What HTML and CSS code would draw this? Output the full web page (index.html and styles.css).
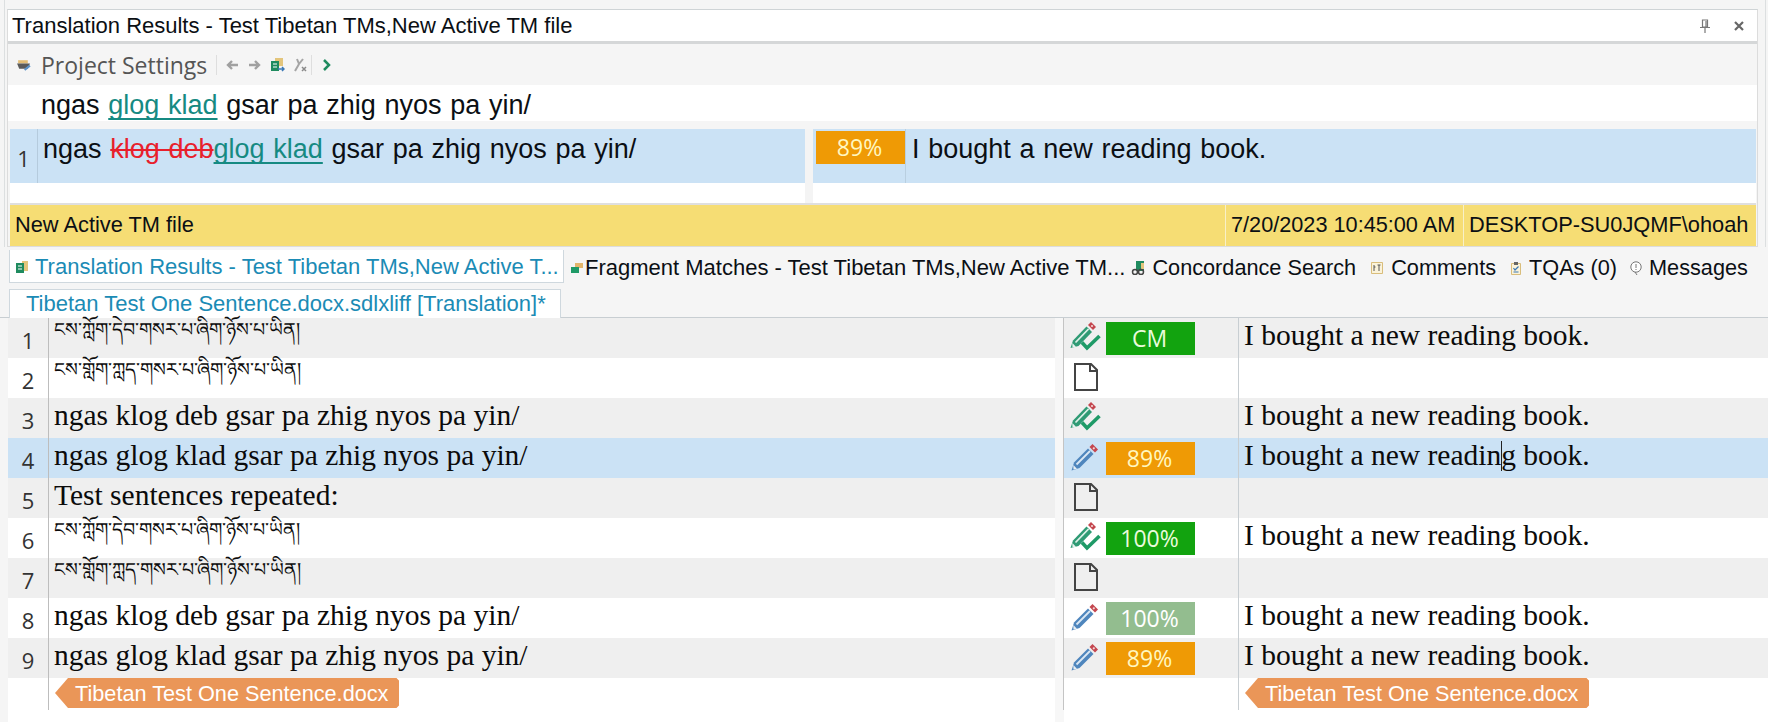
FILE: index.html
```html
<!DOCTYPE html>
<html lang="en">
<head>
<meta charset="utf-8">
<title>Translation Results</title>
<link rel="stylesheet" href="styles.css">
</head>
<body>
<svg class="defs" width="0" height="0" aria-hidden="true">
  <symbol id="pencil" viewBox="0 0 28 28">
    <path d="M0.500 27.500 3 19.500 17 5.500 22.500 11 8.500 25Z" fill="#4f86bd"/>
    <path d="M5.500 21.500 19 8" stroke="#dbe8f4" stroke-width="1.800"/>
    <path d="M18.500 4 21.500 1 27 6.500 24 9.500Z" fill="#c4464e"/>
    <circle cx="22.800" cy="5.300" r="1.100" fill="#f2d6d6"/>
    <path d="M2.300 22 6 25.700 2.500 26.500Z" fill="#e8eef3"/>
  </symbol>
  <symbol id="pencil-check" viewBox="0 0 32 30">
    <path d="M1.500 27 4 19.500 17.500 5.500 23 11 9.500 25Z" fill="#2f9a74"/>
    <path d="M6.500 21.500 19.500 8" stroke="#dff1e9" stroke-width="1.800"/>
    <path d="M19 4 22 1 27 6 24 9Z" fill="#c4464e"/>
    <circle cx="23" cy="5" r="1.100" fill="#f2d6d6"/>
    <path d="M3.300 22 7 25.700 3.500 26.500Z" fill="#e8f2ee"/>
    <path d="M13 21.500 18 27 30.500 15" fill="none" stroke="#1f9a67" stroke-width="3.600"/>
  </symbol>
  <symbol id="doc" viewBox="0 0 24 28">
    <path d="M1 1H17L23 7V27H1Z" fill="none" stroke="#444" stroke-width="2"/>
    <path d="M16 1V8H23" fill="none" stroke="#444" stroke-width="2"/>
  </symbol>
</svg>

<main class="app">
  <div class="dock">
  <section class="panel">
    <header class="panel-head">
      <h1 class="panel-title">Translation Results - Test Tibetan TMs,New Active TM file</h1>
      <svg class="pin" viewBox="0 0 12 14" width="12" height="14"><path d="M3.500 1H8.500V8H3.500ZM1 8.500H11M6 9V14M7 2V8" fill="none" stroke="#777" stroke-width="1.200"/></svg>
      <svg class="close" viewBox="0 0 12 12" width="12" height="12"><path d="M2 2 10 10M10 2 2 10" stroke="#666" stroke-width="2.200"/></svg>
    </header>
    <div class="toolbar">
      <svg class="t-icon settings" viewBox="0 0 14 14" width="15" height="15"><path d="M2 3H11V6H2Z" fill="#e3bd74"/><path d="M1 6H13L11 11H3Z" fill="#5b5b5b"/><path d="M8 12 13 8" stroke="#5d93c7" stroke-width="2"/></svg>
      <span class="t-label">Project Settings</span>
      <span class="t-sep"></span>
      <svg class="t-arrow" viewBox="0 0 14 12" width="14" height="12"><path d="M13 6H3M7 2 3 6 7 10" fill="none" stroke="#a0a0a0" stroke-width="2.400"/></svg>
      <svg class="t-arrow" viewBox="0 0 14 12" width="14" height="12"><path d="M1 6H11M7 2 11 6 7 10" fill="none" stroke="#a0a0a0" stroke-width="2.400"/></svg>
      <svg class="t-icon db" viewBox="0 0 14 14" width="14" height="14"><path d="M4 0H12V8H4Z" fill="#e3c57c"/><path d="M0 3H8V13H0Z" fill="#1f8b5f"/><path d="M2 6H6M2 9H6" stroke="#fff"/><path d="M7 11H13M11 9 13 11 11 13" fill="none" stroke="#3b78b5" stroke-width="1.500"/></svg>
      <svg class="t-icon tools" viewBox="0 0 14 14" width="14" height="14"><path d="M10 1 6 6 2 13M4 1 6 6" fill="none" stroke="#a5a5a5" stroke-width="2"/><path d="M9 9 13 13M13 9 9 13" stroke="#8a8a8a" stroke-width="1.500"/></svg>
      <span class="t-sep t-sep-2"></span>
      <svg class="t-chev" viewBox="0 0 10 14" width="10" height="14"><path d="M2 2 7 7 2 12" fill="none" stroke="#1f8b5f" stroke-width="2.500"/></svg>
    </div>
    <div class="source">ngas <u class="ins">glog klad</u> gsar pa zhig nyos pa yin/</div>
    <div class="result">
      <div class="res-left">
        <div class="res-num">1</div>
        <div class="res-text">ngas <s class="del">klog deb</s><u class="ins">glog klad</u> gsar pa zhig nyos pa yin/</div>
      </div>
      <div class="res-split"></div>
      <div class="res-right">
        <div class="res-badge"><span class="badge orange">89%</span></div>
        <div class="res-text res-target">I bought a new reading book.</div>
      </div>
    </div>
    <div class="res-blank"><span class="blank-l"></span><span class="res-split"></span><span class="blank-r"></span></div>
    <div class="infobar">
      <span class="info-main">New Active TM file</span>
      <span class="info-date">7/20/2023 10:45:00 AM</span>
      <span class="info-user">DESKTOP-SU0JQMF\ohoah</span>
    </div>
  </section>
  </div>

  <nav class="tabs">
    <div class="tab active">
      <svg viewBox="0 0 14 14" width="14" height="14"><path d="M7 1H13V11H7Z" fill="#e3c57c"/><path d="M1 3H9V13H1Z" fill="#1f8b5f"/><path d="M3 6H7M3 9H7" stroke="#fff"/></svg>
      <span class="tab-text">Translation Results - Test Tibetan TMs,New Active T...</span>
    </div>
    <div class="tab frag">
      <svg viewBox="0 0 14 14" width="14" height="14"><path d="M5 2H13V7H5Z" fill="#e3b66c"/><path d="M1 6H9V12H1Z" fill="#1f9a67"/></svg>
      <span>Fragment Matches - Test Tibetan TMs,New Active TM...</span>
    </div>
    <div class="tab conc">
      <svg viewBox="0 0 14 14" width="14" height="14"><path d="M5 0H13V10H5Z" fill="#1f8b5f"/><path d="M10 2H13V8H10Z" fill="#e3c57c"/><circle cx="4" cy="11" r="2.500" fill="none" stroke="#444" stroke-width="1.500"/><circle cx="10" cy="11" r="2.500" fill="none" stroke="#444" stroke-width="1.500"/></svg>
      <span>Concordance Search</span>
    </div>
    <div class="tab comm">
      <svg viewBox="0 0 14 14" width="14" height="14"><path d="M1.500 1.500H12.500V12.500H1.500Z" fill="#fbf3da" stroke="#d9bd7b"/><path d="M4 4V10M4 6H5.500M9 4V10M7.500 4H10.500" stroke="#555"/></svg>
      <span>Comments</span>
    </div>
    <div class="tab tqa">
      <svg viewBox="0 0 14 14" width="14" height="14"><path d="M2.500 2.500H11.500V13.500H2.500Z" fill="#fbf3da" stroke="#d9bd7b"/><path d="M5 1H9V4H5Z" fill="#666"/><path d="M4.500 7 6 9 9.500 5.500M4.500 11H9.500" fill="none" stroke="#3b78b5" stroke-width="1.200"/></svg>
      <span>TQAs (0)</span>
    </div>
    <div class="tab msg">
      <svg viewBox="0 0 14 14" width="14" height="14"><circle cx="7" cy="6" r="5.200" fill="#fff" stroke="#777"/><path d="M7 3V7M7 8V9M6 11 8 14" stroke="#777"/></svg>
      <span>Messages</span>
    </div>
  </nav>

  <div class="doc-tabs"><div class="doc-tab">Tibetan Test One Sentence.docx.sdlxliff [Translation]*</div></div>

  <section class="grid">
    <div class="row odd"><div class="n">1</div><div class="src tib" lang="bo">ངས་ཀློག་དེབ་གསར་པ་ཞིག་ཉོས་པ་ཡིན།</div><div class="gap"></div><div class="st"><svg class="ico pc"><use href="#pencil-check"/></svg><span class="badge green">CM</span></div><div class="tgt">I bought a new reading book.</div></div>
    <div class="row"><div class="n">2</div><div class="src tib" lang="bo">ངས་གློག་ཀླད་གསར་པ་ཞིག་ཉོས་པ་ཡིན།</div><div class="gap"></div><div class="st"><svg class="ico dc"><use href="#doc"/></svg></div><div class="tgt"></div></div>
    <div class="row odd"><div class="n">3</div><div class="src">ngas klog deb gsar pa zhig nyos pa yin/</div><div class="gap"></div><div class="st"><svg class="ico pc"><use href="#pencil-check"/></svg></div><div class="tgt">I bought a new reading book.</div></div>
    <div class="row sel"><div class="n">4</div><div class="src">ngas glog klad gsar pa zhig nyos pa yin/</div><div class="gap"></div><div class="st"><svg class="ico pn"><use href="#pencil"/></svg><span class="badge orange">89%</span></div><div class="tgt">I bought a new readin<span class="caret"></span>g book.</div></div>
    <div class="row odd"><div class="n">5</div><div class="src">Test sentences repeated:</div><div class="gap"></div><div class="st"><svg class="ico dc"><use href="#doc"/></svg></div><div class="tgt"></div></div>
    <div class="row"><div class="n">6</div><div class="src tib" lang="bo">ངས་ཀློག་དེབ་གསར་པ་ཞིག་ཉོས་པ་ཡིན།</div><div class="gap"></div><div class="st"><svg class="ico pc"><use href="#pencil-check"/></svg><span class="badge green">100%</span></div><div class="tgt">I bought a new reading book.</div></div>
    <div class="row odd"><div class="n">7</div><div class="src tib" lang="bo">ངས་གློག་ཀླད་གསར་པ་ཞིག་ཉོས་པ་ཡིན།</div><div class="gap"></div><div class="st"><svg class="ico dc"><use href="#doc"/></svg></div><div class="tgt"></div></div>
    <div class="row"><div class="n">8</div><div class="src">ngas klog deb gsar pa zhig nyos pa yin/</div><div class="gap"></div><div class="st"><svg class="ico pn"><use href="#pencil"/></svg><span class="badge pale">100%</span></div><div class="tgt">I bought a new reading book.</div></div>
    <div class="row odd"><div class="n">9</div><div class="src">ngas glog klad gsar pa zhig nyos pa yin/</div><div class="gap"></div><div class="st"><svg class="ico pn"><use href="#pencil"/></svg><span class="badge orange">89%</span></div><div class="tgt">I bought a new reading book.</div></div>
    <div class="row last"><div class="n"></div><div class="src"><span class="tag">Tibetan Test One Sentence.docx</span></div><div class="gap"></div><div class="st"></div><div class="tgt"><span class="tag">Tibetan Test One Sentence.docx</span></div></div>
    <div class="row tail"><div></div><div></div><div class="gap"></div></div>
  </section>
</main>
</body>
</html>
```
FILE: styles.css
```css
* { box-sizing: border-box; }
html, body { margin: 0; height: 100%; }
body { background: #f5f5f5; color: #0b0f14; font-family: "Liberation Sans", Arial, sans-serif; overflow: hidden; }
.defs { position: absolute; }
.app { display: flex; flex-direction: column; height: 722px; }

.dock { margin: 0 2px 0 4px; padding: 9px 7px 0 2px; border-left: 1px solid #dcdfe0; border-right: 1px solid #dcdfe0; }
.panel { border: 1px solid #dcdcdc; border-top-color: #cfd4d6; background: #f5f5f5; }
.panel-head { height: 34px; display: flex; align-items: center; padding-left: 4px; background: #fff; border-bottom: 3px solid #d5d7d8; }
.panel-title { flex: 1; margin: 0; font-weight: 400; font-size: 22px; white-space: nowrap; }
.pin { margin-right: 22px; }
.close { margin-right: 12px; }

.toolbar { height: 41px; display: flex; align-items: center; background: #f5f5f5; padding-left: 8px; }
.t-icon, .t-arrow, .t-chev { flex: none; }
.t-label { margin-left: 10px; font-family: "Open Sans", sans-serif; font-size: 23px; color: #555; white-space: nowrap; }
.t-sep { width: 1px; height: 20px; background: #dedede; margin: 0 8px 0 9px; }
.t-arrow { margin-right: 9px; }
.db { margin: 0 8px 0 0; }
.tools { margin: 0; }
.t-sep-2 { margin: 0 10px 0 4px; }

.source { height: 36px; background: #fff; padding-left: 33px; font-size: 27px; line-height: 40px; white-space: nowrap; word-spacing: 1.200px; }
.ins { color: #168a82; text-decoration-thickness: 1.500px; text-underline-offset: 4px; text-decoration-skip-ink: none; }
.del { color: #e8202c; text-decoration-thickness: 2px; }

.result { margin: 8px 1px 0 2px; height: 54px; display: flex; background: #f4f4f4; }
.res-left { width: 795px; display: flex; background: #cbe2f5; flex: none; }
.res-num { width: 28px; border-right: 1px solid #b5cbdd; font-family: "Open Sans", sans-serif; font-size: 22px; line-height: 58px; text-align: center; color: #333; flex: none; }
.res-text { font-size: 27px; line-height: 40px; padding-left: 5px; white-space: nowrap; word-spacing: 1.200px; }
.res-split { width: 8px; background: #f4f4f4; flex: none; }
.res-right { flex: 1; display: flex; background: #cbe2f5; }
.res-badge { width: 93px; padding: 2px 0 0 3px; border-right: 1px solid #b9cfe0; flex: none; }
.res-target { padding-left: 6px; }
.res-blank { display: flex; height: 20px; background: #fff; margin: 0 1px 0 2px; }
.blank-l { width: 795px; }
.blank-r { flex: 1; }

.infobar { height: 43px; display: flex; align-items: center; background: #f6dd74; border-top: 2px solid #dfdfdf; margin: 0 1px 0 2px; font-size: 21.800px; white-space: nowrap; }
.info-main { flex: 1; padding: 0 0 1px 5px; }
.info-date { width: 238px; padding-left: 5px; height: 100%; line-height: 40px; border-left: 1px solid #f8f0c8; font-size: 21.700px; }
.info-user { width: 293px; padding-left: 5px; height: 100%; line-height: 40px; border-left: 1px solid #f8f0c8; }

.tabs { display: flex; align-items: flex-start; height: 40px; margin-top: 3px; padding-left: 9px; font-size: 21.700px; white-space: nowrap; }
.tab { display: flex; align-items: center; height: 33px; padding-top: 2px; }
.tab svg { flex: none; }
.tab.active { width: 555px; padding: 2px 0 0 5px; gap: 6px; background: #fff; border: 1px solid #cfd8de; border-top: 0; color: #1b8bb5; font-size: 22px; }
.frag { margin-left: 6px; gap: 1px; font-size: 22px; }
.conc { margin-left: 6px; gap: 7px; }
.comm { margin-left: 14px; gap: 7px; }
.tqa { margin-left: 13px; gap: 6px; }
.msg { margin-left: 12px; gap: 6px; }

.doc-tabs { height: 29px; margin-top: -1px; padding-left: 9px; border-bottom: 1px solid #c8ced2; }
.doc-tab { width: 552px; height: 29px; padding-left: 16px; background: #fff; border: 1px solid #cfd8de; border-bottom: 0; font-size: 22px; line-height: 28px; color: #1b8bb5; white-space: nowrap; }

.grid { display: flex; flex-direction: column; background: #fff; margin-left: 8px; flex: 1; }
.row { display: grid; grid-template-columns: 41px 1006px 9px 175px 1fr; height: 40px; background: #fff; flex: none; }
.row.odd { background: #efefef; }
.row.sel { background: #cbe2f5; }
.row.last { height: 32px; }
.row.tail { flex: 1; }
.row.tail .gap { border-right: 0; }
.n { border-right: 1px solid #bdbdbd; font-family: "Open Sans", sans-serif; font-size: 22px; line-height: 45px; text-align: center; color: #333; }
.src, .tgt { font-family: "Liberation Serif", "Times New Roman", serif; font-size: 29.500px; line-height: 34px; padding-left: 5px; white-space: nowrap; color: #0b0b0b; }
.tib { font-size: 19px; line-height: 24px; }
.gap { background: #f7f7f7; border-right: 1px solid #c4c4c4; }
.st { display: flex; align-items: flex-start; border-right: 1px solid #c8ced2; padding-left: 5px; position: relative; }
.ico { flex: none; margin-top: 5px; }
.pc { width: 32px; height: 30px; margin-top: 3px; }
.pn { width: 28px; height: 28px; margin-left: 2px; }
.dc { width: 24px; height: 28px; margin-left: 5px; margin-top: 5px; }
.badge { display: block; width: 89px; height: 33px; padding-right: 2px; font-family: "Open Sans", sans-serif; font-size: 23px; line-height: 33px; text-align: center; color: #fff; }
.st .badge { position: absolute; left: 42px; top: 4px; }
.green { background: #12a30f; color: #eafbdc; }
.orange { background: #ef9a05; color: #fff7c0; }
.pale { background: #93bd8f; }
.caret { display: inline-block; width: 1px; height: 30px; margin-right: -1px; background: #222; vertical-align: -6px; }
.tag { display: inline-block; height: 30px; padding: 0 11px 0 20px; background: #ea9658; color: #fff; font-family: "Liberation Sans", Arial, sans-serif; font-size: 21.700px; line-height: 31px; clip-path: polygon(13px 0, calc(100% - 3px) 0, 100% 3px, 100% calc(100% - 3px), calc(100% - 3px) 100%, 13px 100%, 0 50%); vertical-align: top; }
.row.last .src, .row.last .tgt { line-height: 30px; padding-left: 6px; }
```
